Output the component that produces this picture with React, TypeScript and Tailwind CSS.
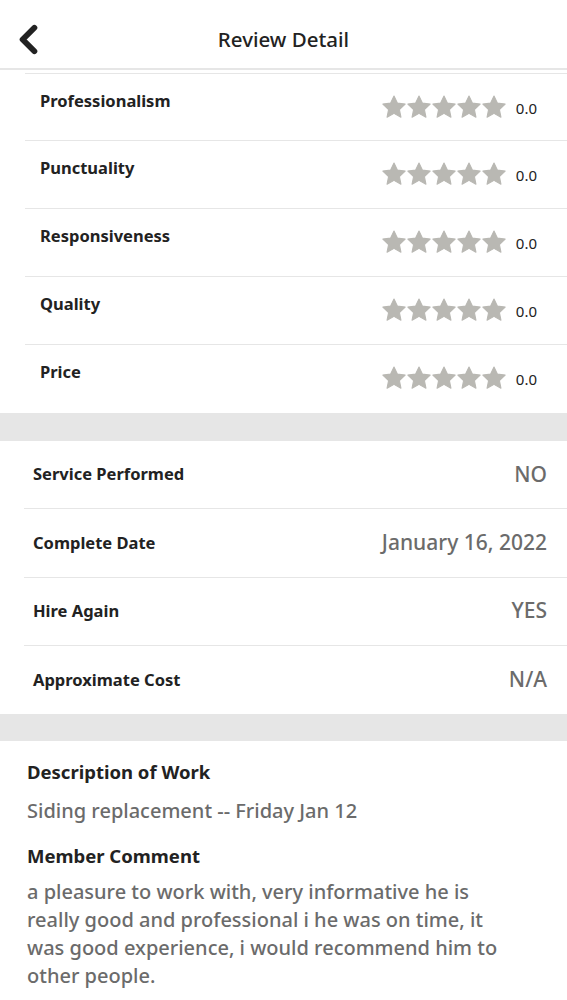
import { ChevronLeft } from 'lucide-react'

const ratings = ['Professionalism', 'Punctuality', 'Responsiveness', 'Quality', 'Price']

const details = [
  { label: 'Service Performed', value: 'NO' },
  { label: 'Complete Date', value: 'January 16, 2022' },
  { label: 'Hire Again', value: 'YES' },
  { label: 'Approximate Cost', value: 'N/A' },
]

function Star() {
  return (
    <svg viewBox="0 0 24 24" className="w-[26px] h-[26px]">
      <path
        d="M12 1.8l3.1 6.6 7.2.9-5.3 5 1.4 7.1L12 17.9l-6.4 3.5L7 14.3l-5.3-5 7.2-.9z"
        fill="#b9b8b3"
        stroke="#b9b8b3"
        strokeWidth="1"
        strokeLinejoin="round"
      />
    </svg>
  )
}

export default function App() {
  return (
    <div className="w-[567px] min-h-[1000px] bg-white text-[#222] font-['Noto_Sans',sans-serif]">
      <header className="relative h-[70px] flex items-center justify-center border-b-2 border-[#e6e6e6]">
        <ChevronLeft className="absolute left-[5px] top-[16px] w-[47px] h-[47px]" strokeWidth={3} />
        <h1 className="text-[20.5px] font-medium mt-[10px]">Review Detail</h1>
      </header>

      <div className="pt-[3px] pl-[25px]">
        {ratings.map((r, i) => (
          <div
            key={r}
            className={`h-[68px] flex items-start justify-between pl-[15px] pr-[30px] border-[#e6e6e6] ${i === 0 ? 'border-t' : ''} ${i < ratings.length - 1 ? 'border-b' : ''}`}
          >
            <span className="text-[16.5px] font-bold mt-[15px]">{r}</span>
            <div className="flex items-center mt-[20px]">
              <div className="flex -space-x-[1px]">
                <Star />
                <Star />
                <Star />
                <Star />
                <Star />
              </div>
              <span className="text-[15px] ml-[9px] mt-[2px]">0.0</span>
            </div>
          </div>
        ))}
      </div>

      <div className="h-[28px] bg-[#e6e6e6]" />

      <div className="pl-[24px]">
        {details.map((d, i) => (
          <div
            key={d.label}
            className={`h-[68.25px] flex items-center justify-between pl-[9px] pr-[20px] border-[#e6e6e6] ${i < details.length - 1 ? 'border-b' : ''}`}
          >
            <span className="text-[16.5px] font-bold">{d.label}</span>
            <span className="text-[21px] font-medium text-[#6b6b6b]">{d.value}</span>
          </div>
        ))}
      </div>

      <div className="h-[27px] bg-[#e6e6e6]" />

      <div className="px-[27px] pt-[17px]">
        <h2 className="text-[18.5px] font-bold leading-[28px]">Description of Work</h2>
        <p className="text-[20px] font-medium text-[#6b6b6b] leading-[28px] mt-[11px]">Siding replacement -- Friday Jan 12</p>
        <h2 className="text-[18.5px] font-bold leading-[28px] mt-[17px]">Member Comment</h2>
        <p className="w-[485px] text-[20px] font-medium text-[#6b6b6b] leading-[28px] mt-[8px]">
          a pleasure to work with, very informative he is really good and professional i he was on time, it was good experience, i would recommend him to other people.
        </p>
      </div>
    </div>
  )
}
